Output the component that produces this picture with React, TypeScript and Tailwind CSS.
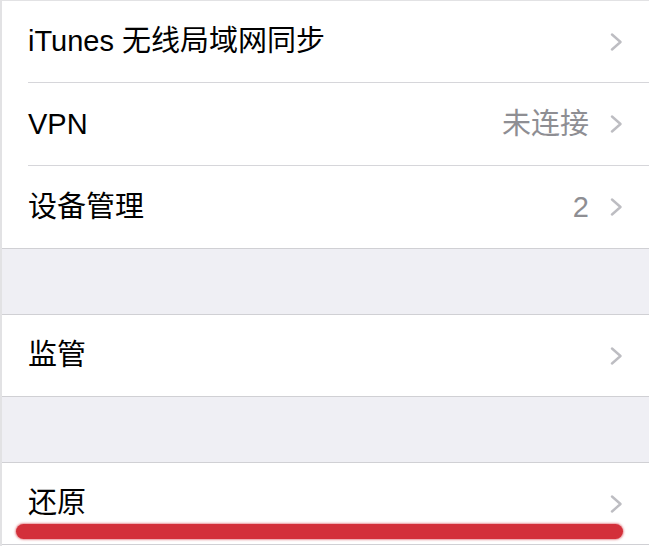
import React from "react";

const Chevron = () => (
  <svg width="13" height="18" viewBox="0 0 13 18" className="shrink-0">
    <polyline points="2,1.5 10.5,9 2,16.5" fill="none" stroke="#bdbdc2" strokeWidth="2.4" strokeLinecap="round" strokeLinejoin="round" />
  </svg>
);

const Row = ({ label, value, last, h }: { label: string; value?: string; last?: boolean; h: string }) => (
  <div className={`${h} bg-white flex flex-col`}>
    <div className="flex-1 flex items-center pl-[26px] pr-[26px]">
      <span className="flex-1 text-[29px] text-black leading-none">{label}</span>
      {value && <span className="text-[29px] text-[#8e8e93] leading-none mr-[21px]">{value}</span>}
      <Chevron />
    </div>
    <div className={last ? "h-px bg-[#d0d0d4]" : "h-px bg-[#d6d6da] ml-[26px]"} />
  </div>
);

const Gap = () => (
  <div className="h-[66px] bg-[#efeff4] flex flex-col">
    <div className="flex-1" />
    <div className="h-px bg-[#d0d0d4]" />
  </div>
);

export default function App() {
  return (
    <div
      className="relative w-full h-[546px] overflow-hidden bg-white border-l-2 border-t border-[#e2e2e4]"
      style={{ fontFamily: '"Liberation Sans", "Noto Sans CJK SC", sans-serif' }}
    >
      <Row h="h-[82px]" label="iTunes 无线局域网同步" />
      <Row h="h-[83px]" label="VPN" value="未连接" />
      <Row h="h-[83px]" label="设备管理" value="2" last />
      <Gap />
      <Row h="h-[82px]" label="监管" last />
      <Gap />
      <Row h="h-[82px]" label="还原" last />
      <div className="absolute left-[14px] top-[523px] w-[607px] h-[15px] rounded-full bg-[#d3303a] shadow-[0_0_2px_1px_rgba(211,48,58,0.5)]" />
    </div>
  );
}
